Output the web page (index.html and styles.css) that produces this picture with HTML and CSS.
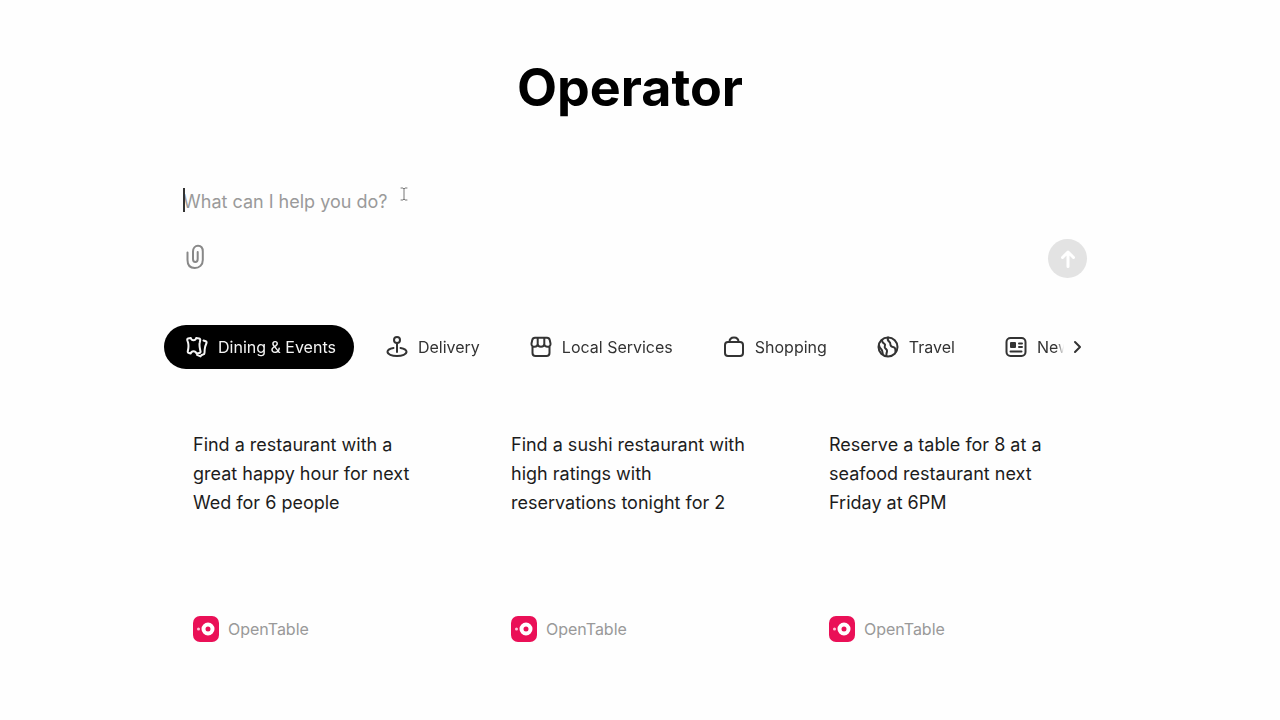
FILE: index.html
```html
<!DOCTYPE html>
<html lang="en">
<head>
<meta charset="utf-8">
<meta name="viewport" content="width=device-width, initial-scale=1">
<title>Operator</title>
<link rel="stylesheet" href="styles.css">
</head>
<body>
<main class="page">
  <h1 class="title">Operator</h1>

  <form class="composer">
    <div class="field">
      <input class="prompt" type="text" placeholder="What can I help you do?" aria-label="Task">
      <span class="caret"></span>
      <svg class="pointer" viewBox="0 0 8 14" aria-hidden="true"><path d="M1 1h2l1 1 1-1h2M4 2v10M1 13h2l1-1 1 1h2"/></svg>
    </div>
    <div class="actions">
      <button class="attach" type="button" aria-label="Attach file">
        <svg viewBox="0 0 20 26" aria-hidden="true"><path d="M2.500 8.500V16c0 5 2.800 8 7.300 8s8-3 8-8V7.500c0-3.500-2-5.700-4.800-5.700s-5 2.200-5 5.700V15c0 1.900.7 3 2.300 3s2.400-1.100 2.400-3V8"/></svg>
      </button>
      <button class="send" type="submit" aria-label="Send">
        <svg viewBox="0 0 16 18" aria-hidden="true"><path d="M8 16.500V2M2.500 7.500 8 2l5.500 5.500"/></svg>
      </button>
    </div>
  </form>

  <nav class="tabs" aria-label="Categories">
    <div class="tab-list">
      <button class="tab active" type="button">
        <svg class="icon" viewBox="0 0 22 22" aria-hidden="true"><path d="M2 2.500 4.800 2c.4 1.600 1.200 2.300 2.700 2.300S9.800 3.600 10.200 2L13 2.500c1 .2 1.400.8 1.200 1.700l-.5 2.500c-.7 3 .1 5.300.8 8.600.2.900-.2 1.500-1.200 1.700l-2.800.5c-.5-1.600-1.400-2.300-3-2.300s-2.400.7-2.800 2.300L2.900 17c-.9-.2-1.300-.8-1.100-1.700.8-3.300 1-5.500.3-8.600l-.8-2.500C1.100 3.300 1.300 2.700 2 2.500Z"/><path d="m17.500 4.500 2.200.8c.8.300 1.100.9.800 1.700-1 2.300-1.600 3.800-1.800 6.300l-.2 3.600c0 .9-.5 1.400-1.400 1.500-1.400.2-2 .7-2.600 2l-3.500-1.500"/></svg>
        <span>Dining &amp; Events</span>
      </button>
      <button class="tab" type="button">
        <svg class="icon" viewBox="0 0 22 22" aria-hidden="true"><circle cx="11" cy="4" r="3"/><path d="M11 7v9M7.500 12C4 12.600 1.500 14 1.500 15.800c0 2.400 4.200 4.200 9.500 4.200s9.500-1.800 9.500-4.200c0-1.800-2.500-3.200-6-3.800"/></svg>
        <span>Delivery</span>
      </button>
      <button class="tab" type="button">
        <svg class="icon" viewBox="0 0 22 22" aria-hidden="true"><path d="M5 1.800h12c1.700 0 2.500 1 2.800 2.500l.7 3.200c.3 2-1 3.300-3 3.300-1.800 0-3.200-1-3.200-2.800 0 1.800-1.400 2.800-3.300 2.800S7.700 9.800 7.700 8c0 1.800-1.400 2.800-3.200 2.800-2 0-3.300-1.300-3-3.300l.7-3.200C2.500 2.800 3.300 1.800 5 1.800ZM7.700 8V2M14.300 8V2M2.500 10.500V17c0 2 1 3 3 3h11c2 0 3-1 3-3v-6.500"/></svg>
        <span>Local Services</span>
      </button>
      <button class="tab" type="button">
        <svg class="icon" viewBox="0 0 22 22" aria-hidden="true"><rect x="2" y="6" width="18" height="14" rx="3"/><path d="M6.500 6c0-2.700 1.700-4.500 4.500-4.500s4.500 1.800 4.500 4.500"/></svg>
        <span>Shopping</span>
      </button>
      <button class="tab" type="button">
        <svg class="icon" viewBox="0 0 22 22" aria-hidden="true"><circle cx="11" cy="11" r="9.500"/><path d="M5 4c0 2.500 1 3 2.500 3.800 1.700.9-.7 2.700.5 4.200 1 1.200 2.500 1.500 2 3.500-.3 1.500-1 2.500-.5 4.500M2 9c.3 2.500 1.300 3.500 2.500 4.500 1 .8.800 2.500 1.300 4.500M11 1.500c-1 2.500.3 3.500 1.500 4.500 1.400 1.200.3 2.500 1.500 4 1.200 1.400 2.500.5 3.700 1.700.9.900.8 2.300.8 4.300"/></svg>
        <span>Travel</span>
      </button>
      <button class="tab" type="button">
        <svg class="icon" viewBox="0 0 22 22" aria-hidden="true"><rect x="1.500" y="2" width="19" height="18" rx="4"/><path d="M14 7.500h3M14 11h3M5.500 15.500h11"/><rect class="solid" x="5" y="6" width="6" height="6" rx="1"/></svg>
        <span>News</span>
      </button>
    </div>
    <button class="more" type="button" aria-label="More categories">
      <svg viewBox="0 0 10 14" aria-hidden="true"><path d="m2 2 5 5-5 5"/></svg>
    </button>
  </nav>

  <section class="cards">
    <article class="card">
      <p class="task">Find a restaurant with a great happy hour for next Wed for 6 people</p>
      <div class="source">
        <svg class="logo" viewBox="0 0 26 26" aria-hidden="true"><rect class="logo-tile" width="26" height="26" rx="7"/><circle class="logo-ring" cx="15" cy="13" r="4.500"/><circle class="logo-dot" cx="15" cy="13" r="1.300"/><circle class="logo-mark" cx="5.500" cy="13" r="1.500"/></svg>
        <span>OpenTable</span>
      </div>
    </article>
    <article class="card">
      <p class="task">Find a sushi restaurant with high ratings with reservations tonight for 2</p>
      <div class="source">
        <svg class="logo" viewBox="0 0 26 26" aria-hidden="true"><rect class="logo-tile" width="26" height="26" rx="7"/><circle class="logo-ring" cx="15" cy="13" r="4.500"/><circle class="logo-dot" cx="15" cy="13" r="1.300"/><circle class="logo-mark" cx="5.500" cy="13" r="1.500"/></svg>
        <span>OpenTable</span>
      </div>
    </article>
    <article class="card">
      <p class="task">Reserve a table for 8 at a seafood restaurant next Friday at 6PM</p>
      <div class="source">
        <svg class="logo" viewBox="0 0 26 26" aria-hidden="true"><rect class="logo-tile" width="26" height="26" rx="7"/><circle class="logo-ring" cx="15" cy="13" r="4.500"/><circle class="logo-dot" cx="15" cy="13" r="1.300"/><circle class="logo-mark" cx="5.500" cy="13" r="1.500"/></svg>
        <span>OpenTable</span>
      </div>
    </article>
  </section>
</main>
</body>
</html>
```

FILE: styles.css
```css
* {
  box-sizing: border-box;
}

body {
  margin: 0;
  padding: 0 20px 0 0;
  background: #fefefe;
  color: #1c1c1c;
  font-family: Inter, "Liberation Sans", sans-serif;
}

button,
input {
  padding: 0;
  border: 0;
  background: none;
  color: inherit;
  font: inherit;
}

svg {
  display: block;
  flex: none;
  fill: none;
  stroke: currentColor;
  stroke-linecap: round;
  stroke-linejoin: round;
}

.page {
  max-width: 932px;
  margin: 0 auto;
  padding-top: 56px;
}

.title {
  margin: 0;
  color: #000;
  font-size: 52px;
  font-weight: 700;
  line-height: 64px;
  text-align: center;
}

.composer {
  padding: 64px 9px 0 19px;
}

.field {
  position: relative;
}

.prompt {
  display: block;
  width: 100%;
  height: 34px;
  font-size: 18px;
  outline: none;
}

.prompt::placeholder {
  color: #9a9a9a;
  opacity: 1;
}

.caret {
  position: absolute;
  top: 4px;
  left: 0;
  width: 2px;
  height: 24px;
  background: #333;
}

.pointer {
  position: absolute;
  top: 3px;
  left: 217px;
  width: 8px;
  height: 14px;
  color: #777;
}

.actions {
  display: flex;
  align-items: center;
  justify-content: space-between;
  margin-top: 21px;
}

.attach {
  padding: 0 2px 4px;
  color: #888;
}

.attach svg {
  width: 20px;
  height: 26px;
  stroke-width: 2;
}

.send {
  display: grid;
  place-items: center;
  width: 39px;
  height: 39px;
  border-radius: 50%;
  background: #e3e3e3;
  color: #fff;
}

.send svg {
  width: 16px;
  height: 18px;
  stroke-width: 3;
}

.tabs {
  display: flex;
  align-items: center;
  margin-top: 47px;
}

.tab-list {
  display: flex;
  flex: 1;
  gap: 10px;
  min-width: 0;
  overflow: hidden;
  mask-image: linear-gradient(to right, #000 calc(100% - 8px), transparent);
}

.tab {
  display: flex;
  flex: none;
  align-items: center;
  gap: 10px;
  height: 44px;
  padding: 0 18px 0 22px;
  border-radius: 22px;
  color: #333;
  font-size: 16px;
  white-space: nowrap;
}

.tab.active {
  background: #000;
  color: #f4f4f4;
}

.icon {
  width: 22px;
  height: 22px;
  stroke-width: 2;
}

.solid {
  fill: currentColor;
  stroke: none;
}

.more {
  padding: 0 13px 0 9px;
  color: #333;
}

.more svg {
  width: 10px;
  height: 14px;
  stroke-width: 2;
}

.cards {
  display: grid;
  grid-template-columns: repeat(3, 1fr);
  gap: 22px;
  margin-top: 61px;
}

.card {
  display: flex;
  flex-direction: column;
  justify-content: space-between;
  min-height: 212px;
  padding: 0 29px;
}

.task {
  margin: 0;
  font-size: 18px;
  line-height: 29px;
}

.source {
  display: flex;
  align-items: center;
  gap: 9px;
  color: #999;
  font-size: 16px;
}

.logo {
  width: 26px;
  height: 26px;
}

.logo-tile {
  fill: #ea1057;
  stroke: none;
}

.logo-ring {
  stroke: #fff;
  stroke-width: 4;
}

.logo-dot {
  fill: #ea1057;
  stroke: none;
}

.logo-mark {
  fill: #ffc4d6;
  stroke: none;
}
```
